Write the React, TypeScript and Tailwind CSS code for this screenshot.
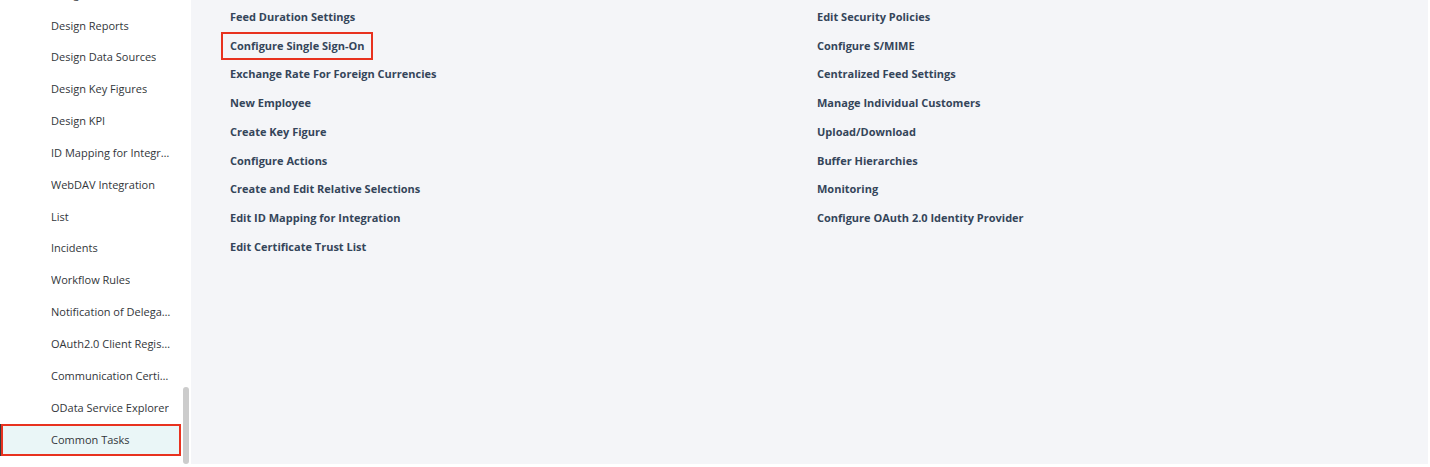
import React from 'react'

const sideItems = [
  'Design Stories',
  'Design Reports',
  'Design Data Sources',
  'Design Key Figures',
  'Design KPI',
  'ID Mapping for Integration',
  'WebDAV Integration',
  'List',
  'Incidents',
  'Workflow Rules',
  'Notification of Delegation',
  'OAuth2.0 Client Registration',
  'Communication Certificates',
  'OData Service Explorer',
  'Common Tasks',
]

const colA = [
  'Feed Duration Settings',
  'Configure Single Sign-On',
  'Exchange Rate For Foreign Currencies',
  'New Employee',
  'Create Key Figure',
  'Configure Actions',
  'Create and Edit Relative Selections',
  'Edit ID Mapping for Integration',
  'Edit Certificate Trust List',
]

const colB = [
  'Edit Security Policies',
  'Configure S/MIME',
  'Centralized Feed Settings',
  'Manage Individual Customers',
  'Upload/Download',
  'Buffer Hierarchies',
  'Monitoring',
  'Configure OAuth 2.0 Identity Provider',
]

function TaskColumn({ items, marked }: { items: string[]; marked?: string }) {
  return (
    <ul className="flex w-[587px] flex-col">
      {items.map((t) => (
        <li key={t} className="flex h-[28.7px] items-center">
          {t === marked ? (
            <span className="-ml-[9px] flex h-[28px] items-center border-2 border-[#e8321f] px-[7px]">{t}</span>
          ) : (
            <span>{t}</span>
          )}
        </li>
      ))}
    </ul>
  )
}

export default function App() {
  return (
    <div className="h-[467px] w-[1430px] overflow-hidden bg-white" style={{ fontFamily: '"Open Sans", "Liberation Sans", sans-serif' }}>
      <div className="flex h-[464px] w-[1428px]">
        {/* Side navigation */}
        <aside className="relative w-[191px] flex-shrink-0 overflow-hidden bg-white">
          <ul className="-mt-[22px] flex flex-col">
            {sideItems.map((t) => {
              const active = t === 'Common Tasks'
              return (
                <li
                  key={t}
                  className={
                    active
                      ? 'ml-[1px] mr-[10px] flex h-[32px] items-center border-2 border-[#e8321f] bg-[#eaf6f7] pl-[48px]'
                      : 'flex h-[31.85px] items-center pl-[51px] pr-[19px]'
                  }
                >
                  <span className="truncate text-[11px] text-[#32363a]">{t}</span>
                </li>
              )
            })}
          </ul>
          <div className="absolute bottom-0 right-[2px] top-[387px] w-[6px] rounded-full bg-[#cccccc]" />
          <div className="absolute bottom-[8px] left-0 h-[32px] w-[1px] bg-[#3a3a3a]" />
        </aside>

        {/* Common tasks */}
        <main className="flex flex-1 bg-[#f4f5f8] pl-[39px] pt-[3px] text-[11px] font-bold text-[#34455a]">
          <TaskColumn items={colA} marked="Configure Single Sign-On" />
          <TaskColumn items={colB} />
        </main>
      </div>
    </div>
  )
}
